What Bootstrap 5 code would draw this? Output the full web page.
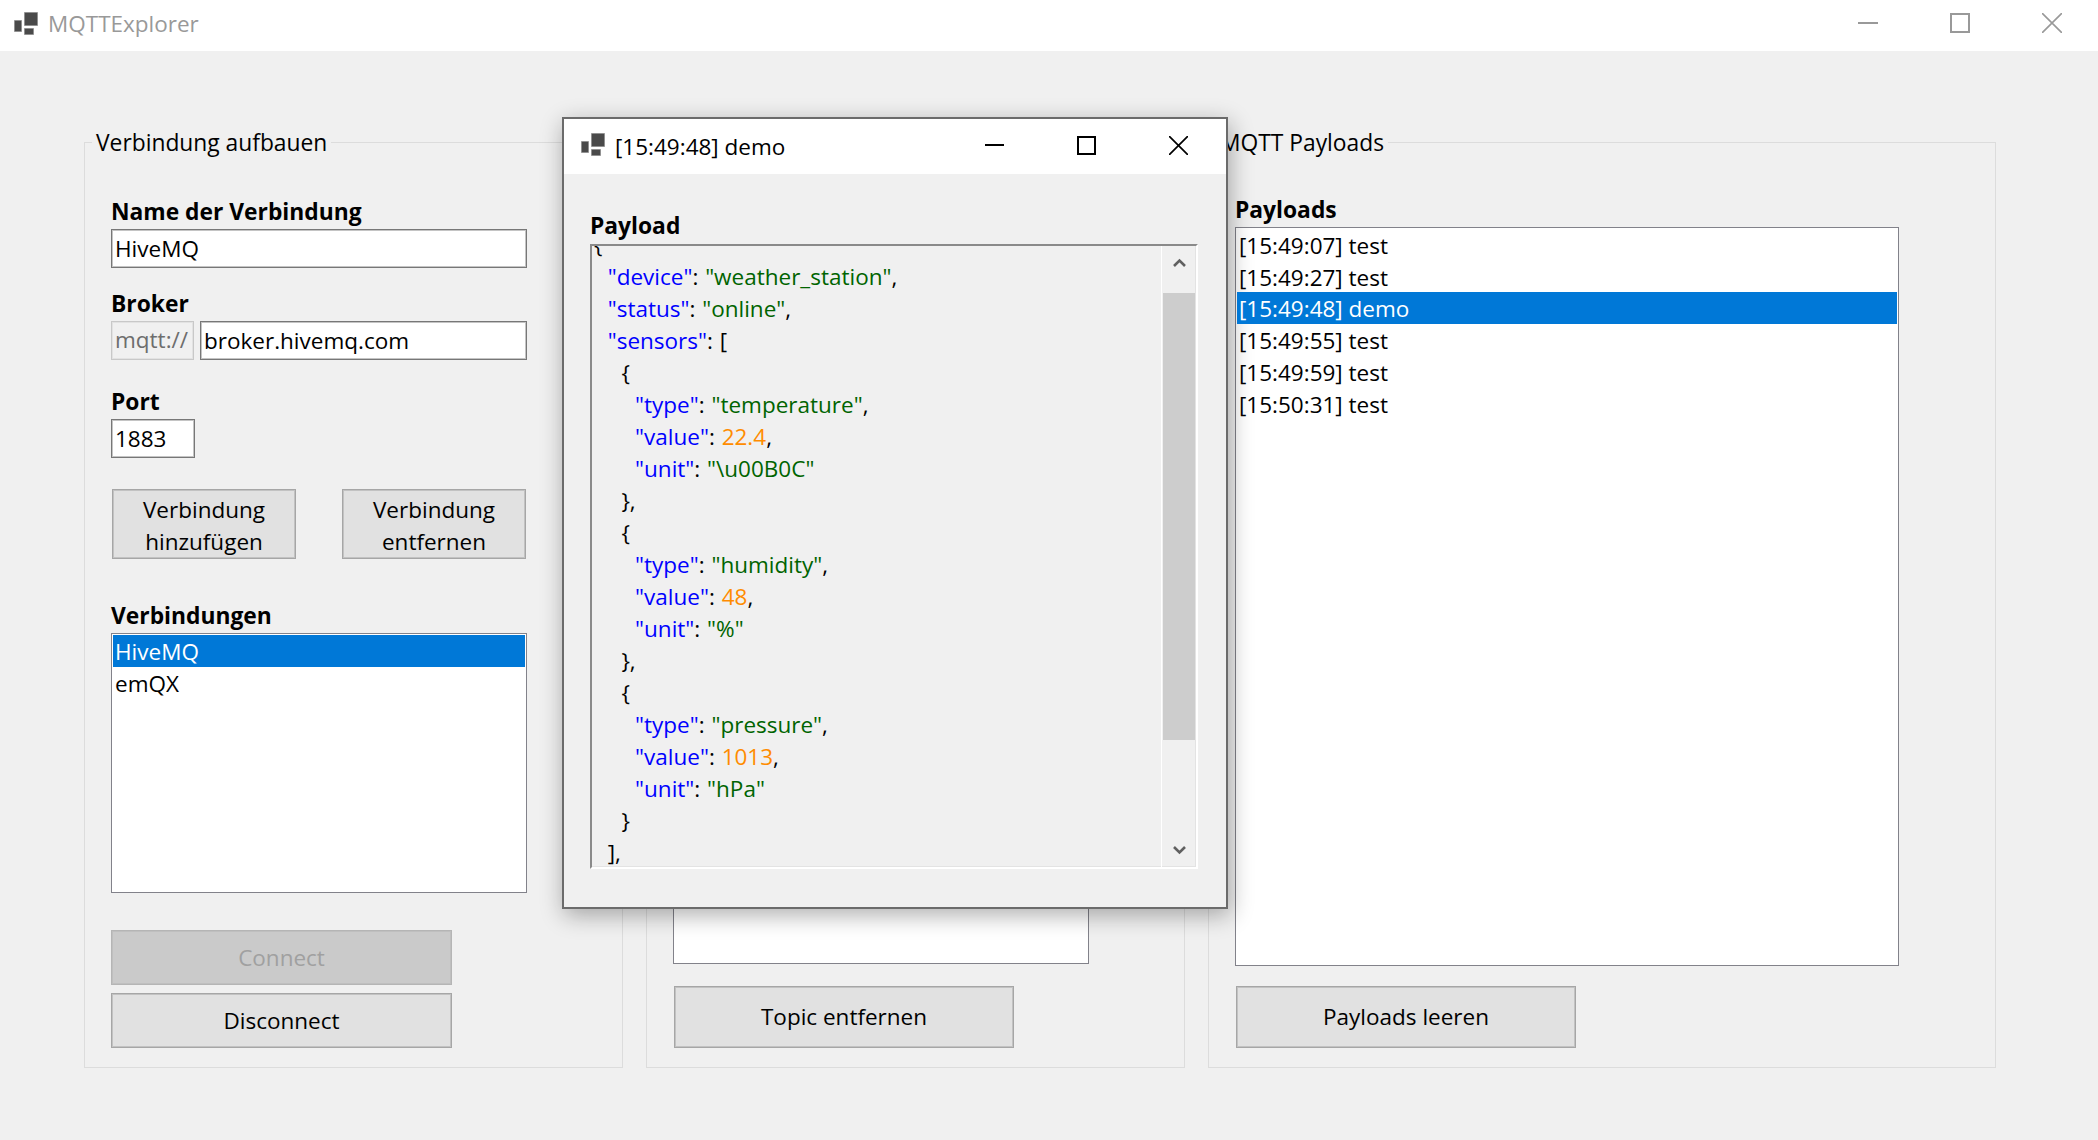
<!DOCTYPE html>
<html lang="de">
<head>
    <meta charset="UTF-8">
    <title>MQTTExplorer</title>
    <link rel="stylesheet" href="https://cdn.jsdelivr.net/npm/bootstrap@5.3.3/dist/css/bootstrap.min.css">
    <script src="https://cdn.jsdelivr.net/npm/bootstrap@5.3.3/dist/js/bootstrap.bundle.min.js"></script>
    <style>
        body {
            background: #f0f0f0;
            color: #000;
            font-family: "Open Sans", "Noto Sans", sans-serif;
            font-size: 22.5px;
            line-height: 32px;
            overflow: hidden;
        }
        .app-title {
            height: 51px;
            background: #fff;
            padding: 0 36px 0 14px;
            color: #999;
        }
        .app-title .app-name { margin-left: 10px; margin-top: -4px; }
        .app-title .app-icon { margin-top: -6px; }
        .caption-btns { gap: 72px; margin-top: -6px; }
        .app-icon { width: 24px; height: 24px; }
        .work-area { padding: 75px 0 0 84px; gap: 23px; }
        .grp {
            height: 942px;
            border: 1px solid #dcdcdc;
            padding: 36px 26px 0;
        }
        .grp legend {
            position: relative;
            top: 1px;
            float: none;
            width: auto;
            font-size: 22.8px;
            line-height: 32px;
            margin: 0 0 0 -19px;
            padding: 0 4px;
        }
        .grp-conn { width: 539px; }
        .grp-topic { width: 539px; }
        .grp-payload { width: 788px; }
        .win-label { font-weight: 700; font-size: 22.8px; margin: 0; line-height: 32px; display: block; }
        .first-label { margin-top: 2px; }
        .win-input.form-control, .prefix-box {
            height: 39px;
            border: 1px solid #777;
            box-shadow: inset 0 0 0 1px #c4c4c4;
            border-radius: 0;
            padding: 0 3px;
            font-size: inherit;
            line-height: 36px;
            color: #000;
            background: #fff;
        }
        .prefix-box { width: 83px; border-color: #c8c8c8; box-shadow: inset 0 0 0 1px #e2e2e2; background: #f0f0f0; color: #6d6d6d; flex: none; }
        .field-row { gap: 6px; }
        .w-field { width: 416px; }
        .w-port.form-control { width: 84px; }
        .mt-a { margin-top: 1px; }
        .mt-b { margin-top: 20px; }
        .mt-c { margin-top: 26px; }
        .mt-d { margin-top: 31px; }
        .mt-e { margin-top: 41px; }
        .mt-f { margin-top: 37px; }
        .mt-g { margin-top: 8px; }
        .mt-h { margin-top: 20px; }
        .mt-i { margin-top: 22px; }
        .win-btn.btn {
            border-radius: 0;
            background: #e1e1e1;
            border: 1px solid #a6a6a6;
            box-shadow: inset 0 0 0 1px #c2c2c2;
            color: #000;
            font-size: inherit;
            line-height: 32px;
            padding: 0;
        }
        .win-btn.btn:disabled { background: #cacaca; border-color: #b5b5b5; box-shadow: inset 0 0 0 1px #bfbfbf; color: #a0a0a0; opacity: 1; }
        .win-btn.btn-small-stack { width: 184px; height: 70px; padding-top: 3px; }
        .btn-wide { width: 341px; height: 55px; }
        .btn-tall { width: 340px; height: 62px; margin-left: 1px; }
        .btn-pair { width: 414px; margin-left: 1px; }
        .win-list {
            border: 1px solid #82828a;
            border-radius: 0;
            background: #fff;
            padding: 1px;
        }
        .win-list .list-group-item {
            border: 0;
            border-radius: 0;
            height: 32px;
            padding: 1px 2px 0;
            line-height: 32px;
            font-size: inherit;
            color: #000;
            background: transparent;
        }
        .win-list .list-group-item.active { background: #0078d7; color: #fff; }
        .list-conn { width: 416px; height: 260px; }
        .list-topic { width: 416px; height: 737px; }
        .list-payload { width: 664px; height: 739px; }

        /* child window lies over the main form */
        .child-win {
            position: absolute;
            left: 562px;
            top: 117px;
            width: 666px;
            height: 792px;
            border: 2px solid #6b6b6b;
            background: #f0f0f0;
            box-shadow: 2px 6px 22px rgba(0, 0, 0, .32);
        }
        .child-title { height: 55px; background: #fff; padding: 0 38px 0 17px; }
        .child-title .app-icon { margin-top: -5px; }
        .child-title .child-name { margin-left: 10px; }
        .child-btns { gap: 73px; margin-top: -2px; }
        .child-body { padding: 36px 0 0 26px; }
        .json-box {
            margin-top: 2px;
            width: 608px;
            height: 625px;
            border-style: solid;
            border-width: 2px;
            border-color: #8a8a8a #fff #fff #8a8a8a;
            box-shadow: inset 0 -1px 0 #e3e3e3, inset -1px 0 0 #e3e3e3;
        }
        .json-text {
            margin: -17px 0 0 2px;
            font-family: "Open Sans", "Noto Sans", sans-serif;
            font-size: inherit;
            line-height: 32px;
            word-spacing: 1px;
            overflow: hidden;
            color: #000;
        }
        .json-view { width: 571px; overflow: hidden; }
        .k { color: #0000ff; }
        .s { color: #006400; }
        .n { color: #ff8c00; }
        .v-scroll { width: 35px; border-left: 1px solid #fff; padding: 12px 0 12px; }
        .v-thumb { width: 32px; height: 447px; background: #cdcdcd; margin-top: 25px; }
    </style>
</head>
<body>
    <header class="app-title d-flex align-items-center">
        <svg class="app-icon" viewBox="0 0 24 24"><path fill="#4a4a4a" stroke="#8d8d8d" stroke-width=".8" d="M0.5 9.5h7v11h-7zM10.5 1.5h13v13h-13zM10.5 17.5h9v6h-9z"/></svg>
        <span class="app-name">MQTTExplorer</span>
        <div class="caption-btns d-flex align-items-center ms-auto">
            <svg width="20" height="20" viewBox="0 0 20 20"><path stroke="#999" stroke-width="2" d="M0 10h20"/></svg>
            <svg width="20" height="20" viewBox="0 0 20 20"><path fill="none" stroke="#999" stroke-width="2" d="M1 1h18v18H1z"/></svg>
            <svg width="20" height="20" viewBox="0 0 20 20"><path stroke="#999" stroke-width="1.6" d="M0 0l20 20M20 0L0 20"/></svg>
        </div>
    </header>

    <main class="work-area d-flex">
        <fieldset class="grp grp-conn">
            <legend>Verbindung aufbauen</legend>
            <label class="win-label first-label">Name der Verbindung</label>
            <input class="form-control win-input w-field mt-a" type="text" value="HiveMQ">
            <label class="win-label mt-b">Broker</label>
            <div class="d-flex w-field field-row mt-a">
                <div class="prefix-box">mqtt://</div>
                <input class="form-control win-input" type="text" value="broker.hivemq.com">
            </div>
            <label class="win-label mt-c">Port</label>
            <input class="form-control win-input w-port mt-a" type="text" value="1883">
            <div class="btn-pair d-flex justify-content-between mt-d">
                <button class="btn win-btn btn-small-stack">Verbindung<br>hinzufügen</button>
                <button class="btn win-btn btn-small-stack">Verbindung<br>entfernen</button>
            </div>
            <label class="win-label mt-e">Verbindungen</label>
            <ul class="list-group win-list list-conn mt-a">
                <li class="list-group-item active">HiveMQ</li>
                <li class="list-group-item">emQX</li>
            </ul>
            <button class="btn win-btn btn-wide d-block mt-f" disabled>Connect</button>
            <button class="btn win-btn btn-wide d-block mt-g">Disconnect</button>
        </fieldset>

        <fieldset class="grp grp-topic">
            <legend>&nbsp;</legend>
            <label class="win-label">&nbsp;</label>
            <ul class="list-group win-list list-topic mt-a"></ul>
            <button class="btn win-btn btn-tall d-block mt-i">Topic entfernen</button>
        </fieldset>

        <fieldset class="grp grp-payload">
            <legend>MQTT Payloads</legend>
            <label class="win-label">Payloads</label>
            <ul class="list-group win-list list-payload mt-a">
                <li class="list-group-item">[15:49:07] test</li>
                <li class="list-group-item">[15:49:27] test</li>
                <li class="list-group-item active">[15:49:48] demo</li>
                <li class="list-group-item">[15:49:55] test</li>
                <li class="list-group-item">[15:49:59] test</li>
                <li class="list-group-item">[15:50:31] test</li>
            </ul>
            <button class="btn win-btn btn-tall d-block mt-h">Payloads leeren</button>
        </fieldset>
    </main>

    <section class="child-win">
        <div class="child-title d-flex align-items-center">
            <svg class="app-icon" viewBox="0 0 24 24"><path fill="#4a4a4a" stroke="#8d8d8d" stroke-width=".8" d="M0.5 9.5h7v11h-7zM10.5 1.5h13v13h-13zM10.5 17.5h9v6h-9z"/></svg>
            <span class="child-name">[15:49:48] demo</span>
            <div class="child-btns d-flex align-items-center ms-auto">
                <svg width="19" height="19" viewBox="0 0 19 19"><path stroke="#000" stroke-width="2" d="M0 9h19"/></svg>
                <svg width="19" height="19" viewBox="0 0 19 19"><path fill="none" stroke="#000" stroke-width="2" d="M1 1h17v17H1z"/></svg>
                <svg width="19" height="19" viewBox="0 0 19 19"><path stroke="#000" stroke-width="1.7" d="M0 0l19 19M19 0L0 19"/></svg>
            </div>
        </div>
        <div class="child-body">
            <label class="win-label">Payload</label>
            <div class="json-box d-flex">
                <div class="json-view flex-grow-1">
<pre class="json-text">{
  <span class="k">"device"</span>: <span class="s">"weather_station"</span>,
  <span class="k">"status"</span>: <span class="s">"online"</span>,
  <span class="k">"sensors"</span>: [
    {
      <span class="k">"type"</span>: <span class="s">"temperature"</span>,
      <span class="k">"value"</span>: <span class="n">22.4</span>,
      <span class="k">"unit"</span>: <span class="s">"\u00B0C"</span>
    },
    {
      <span class="k">"type"</span>: <span class="s">"humidity"</span>,
      <span class="k">"value"</span>: <span class="n">48</span>,
      <span class="k">"unit"</span>: <span class="s">"%"</span>
    },
    {
      <span class="k">"type"</span>: <span class="s">"pressure"</span>,
      <span class="k">"value"</span>: <span class="n">1013</span>,
      <span class="k">"unit"</span>: <span class="s">"hPa"</span>
    }
  ],
</pre>
                </div>
                <div class="v-scroll d-flex flex-column align-items-center">
                    <svg width="13" height="10" viewBox="0 0 13 10"><path fill="none" stroke="#606060" stroke-width="2.6" d="M1 8l5.5-5.5L12 8"/></svg>
                    <div class="v-thumb"></div>
                    <svg class="mt-auto" width="13" height="10" viewBox="0 0 13 10"><path fill="none" stroke="#606060" stroke-width="2.6" d="M1 2l5.5 5.5L12 2"/></svg>
                </div>
            </div>
        </div>
    </section>
</body>
</html>
